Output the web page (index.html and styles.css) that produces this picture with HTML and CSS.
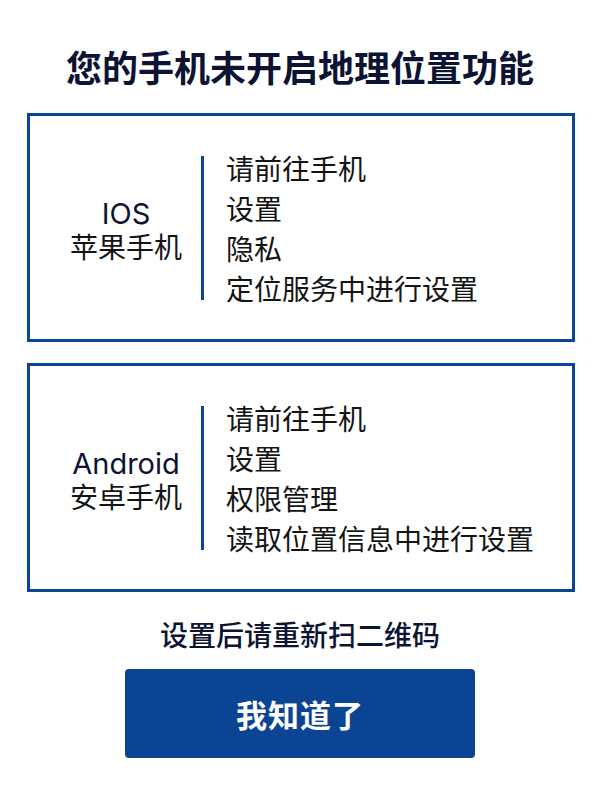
FILE: index.html
```html
<!DOCTYPE html>
<html lang="zh-CN">
<head>
<meta charset="utf-8">
<link rel="stylesheet" href="styles.css">
</head>
<body>
<div class="page">
  <h1 class="title">您的手机未开启地理位置功能</h1>
  <div class="card">
    <div class="label">
      <div class="os">IOS</div>
      <div class="brand">苹果手机</div>
    </div>
    <div class="divider"></div>
    <ul class="steps">
      <li>请前往手机</li>
      <li>设置</li>
      <li>隐私</li>
      <li>定位服务中进行设置</li>
    </ul>
  </div>
  <div class="card">
    <div class="label">
      <div class="os">Android</div>
      <div class="brand">安卓手机</div>
    </div>
    <div class="divider"></div>
    <ul class="steps">
      <li>请前往手机</li>
      <li>设置</li>
      <li>权限管理</li>
      <li>读取位置信息中进行设置</li>
    </ul>
  </div>
  <p class="hint">设置后请重新扫二维码</p>
  <button class="btn">我知道了</button>
</div>
</body>
</html>
```
FILE: styles.css
```css
html, body {
  margin: 0;
  padding: 0;
  background: #ffffff;
}
body {
  font-family: "Noto Sans CJK SC", "Noto Sans", sans-serif;
  color: #0f1430;
}
.page {
  display: flex;
  flex-direction: column;
  align-items: center;
  padding-top: 44px;
}
.title {
  margin: 0;
  font-size: 36px;
  line-height: 44px;
  font-weight: 700;
  color: #0d1333;
}
.card {
  box-sizing: border-box;
  width: 548px;
  height: 229px;
  margin-left: 2px;
  border: 3px solid #0b4595;
  display: flex;
  align-items: center;
  padding-left: 21px;
}
.title + .card {
  margin-top: 25px;
}
.card + .card {
  margin-top: 21px;
}
.label {
  width: 150px;
  text-align: center;
  color: #141414;
  padding-top: 4px;
}
.os {
  font-family: "Inter", "Noto Sans", sans-serif;
  font-size: 29px;
  line-height: 33px;
  color: #0d1333;
}
.brand {
  font-size: 28px;
  line-height: 33px;
}
.divider {
  width: 3px;
  height: 144px;
  background: #0b4595;
}
.steps {
  list-style: none;
  margin: 0;
  padding: 0 0 0 22px;
  font-size: 28px;
  line-height: 40px;
  color: #141414;
}
.hint {
  margin: 22px 0 0;
  font-size: 28px;
  line-height: 40px;
  font-weight: 500;
  color: #0d1333;
}
.btn {
  margin-top: 15px;
  width: 350px;
  height: 89px;
  border: none;
  border-radius: 4px;
  background: #0b4493;
  color: #ffffff;
  font-family: "Noto Sans CJK SC", "Noto Sans", sans-serif;
  font-size: 31px;
  font-weight: 700;
  letter-spacing: 1px;
}
```
